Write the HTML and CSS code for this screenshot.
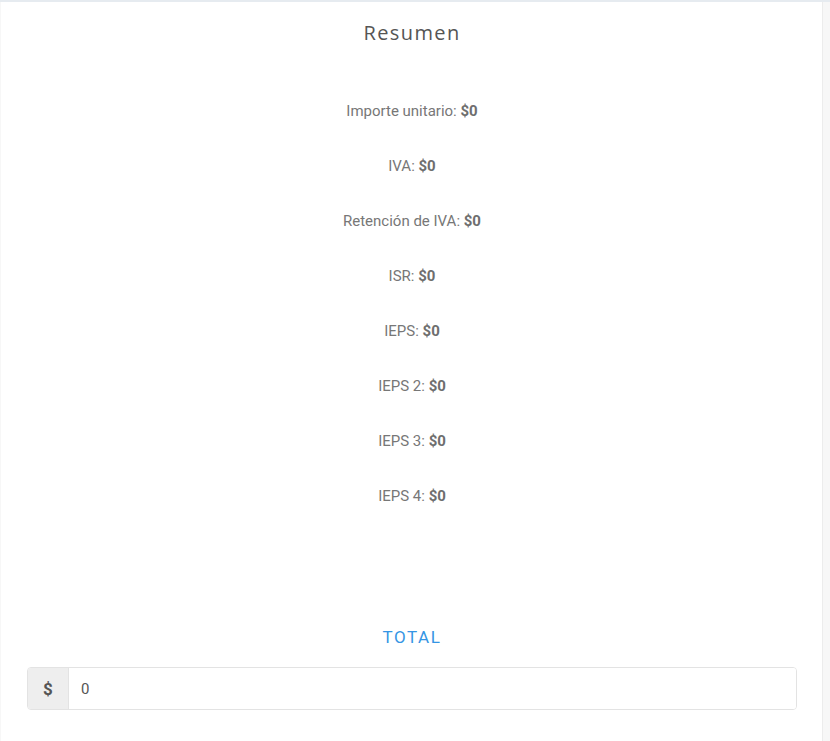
FILE: index.html
```html
<!DOCTYPE html>
<html lang="es">
<head>
<meta charset="utf-8">
<link rel="stylesheet" href="styles.css">
</head>
<body>
<div class="card">
  <h2 class="title">Resumen</h2>
  <div class="rows">
    <p class="row">Importe unitario: <b>$0</b></p>
    <p class="row">IVA: <b>$0</b></p>
    <p class="row">Retención de IVA: <b>$0</b></p>
    <p class="row">ISR: <b>$0</b></p>
    <p class="row">IEPS: <b>$0</b></p>
    <p class="row">IEPS 2: <b>$0</b></p>
    <p class="row">IEPS 3: <b>$0</b></p>
    <p class="row">IEPS 4: <b>$0</b></p>
  </div>
  <div class="total-label">TOTAL</div>
  <div class="input-group">
    <span class="addon">$</span>
    <input class="field" type="text" value="0">
  </div>
</div>
</body>
</html>
```

FILE: styles.css
```css
html, body {
  margin: 0;
  padding: 0;
}
body {
  background: #f7f7f7;
  font-family: Roboto, "Liberation Sans", sans-serif;
  height: 741px;
  overflow: hidden;
  border-top: 2px solid #e6ebf0;
  box-sizing: border-box;
}
.card {
  background: #fff;
  margin-left: 1px;
  width: 822px;
  height: 739px;
  border-right: 1px solid #ececec;
  box-sizing: border-box;
  padding: 19px 25px 0 26px;
}
.title {
  margin: 0;
  text-align: center;
  font-family: "Open Sans", sans-serif;
  font-weight: 400;
  font-size: 20px;
  line-height: 24px;
  letter-spacing: 1.4px;
  color: #555;
}
.rows {
  margin-top: 56px;
}
.row {
  margin: 0 0 35px;
  text-align: center;
  font-size: 15px;
  line-height: 20px;
  color: #777;
}
.row:last-child {
  margin-bottom: 0;
}
.row b {
  font-weight: 700;
  color: #6e6e6e;
}
.total-label {
  margin-top: 119px;
  text-align: center;
  font-size: 17px;
  line-height: 24px;
  letter-spacing: 1.6px;
  color: #3595e4;
}
.input-group {
  display: flex;
  margin-top: 18px;
  height: 43px;
  border: 1px solid #e3e3e3;
  border-radius: 4px;
  box-sizing: border-box;
  overflow: hidden;
}
.addon {
  width: 40px;
  background: #eeeeee;
  border-right: 1px solid #e3e3e3;
  display: flex;
  align-items: center;
  justify-content: center;
  font-size: 17px;
  font-weight: 700;
  color: #555;
}
.field {
  flex: 1;
  border: none;
  outline: none;
  padding: 0 12px;
  font-family: Roboto, "Liberation Sans", sans-serif;
  font-size: 15px;
  color: #555;
  background: #fff;
}
```
